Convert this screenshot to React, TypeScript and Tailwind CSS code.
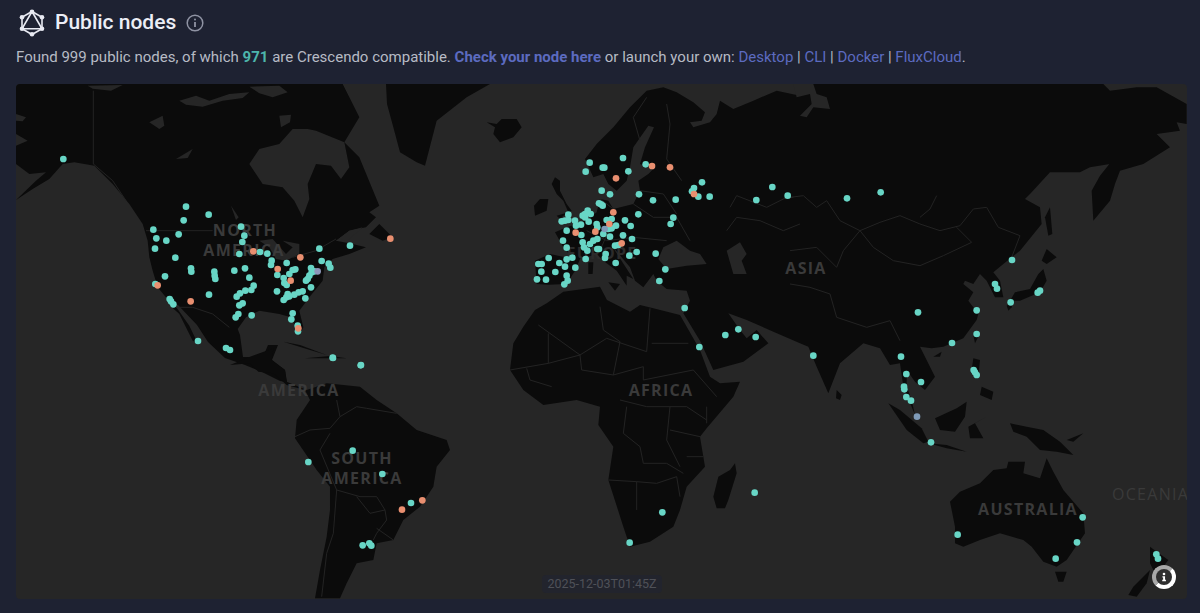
import React from 'react'

const LAND = '#0b0b0b'
const SEA = '#262626'
const LINE = '#232323'
const TEAL = '#68d6c6'
const ORANGE = '#e98f70'
const BLUE = '#7f9bb8'

// transforms: every shape below is written in the coords of a 3x crop of that area
const NA = 'translate(16 84) scale(0.33333)'
const EU = 'translate(400 84) scale(0.33333)'
const ASIA = 'translate(790 84) scale(0.33333)'
const SEAS = 'translate(800 320) scale(0.33333)'
const AF = 'translate(480 300) scale(0.33333)'
const SA = 'translate(230 340) scale(0.33333)'
const NZ = 'translate(1000 480) scale(0.33333)'

const naLand = [
  'M0,0 H980 L1000,40 L1030,100 L985,175 L1030,220 L1090,365 L1060,385 L1080,400 L1050,430 L1000,440 L960,470 L1000,478 L1050,490 L1000,510 L950,525 L925,550 L920,590 L880,640 L850,680 L862,730 L850,755 L825,700 L790,690 L730,680 L690,700 L665,735 L672,753 L681,819 L741,819 L756,783 L786,783 L768,828 L807,858 L813,894 L792,891 L738,864 L687,843 L627,822 L576,774 L543,723 L486,663 L462,655 L425,610 L410,560 L400,520 L395,470 L380,420 L340,360 L290,300 L235,245 L175,235 L140,240 L100,285 L50,315 L0,348 L60,290 L90,265 L40,270 L0,240 Z',
  'M470,672 L490,690 L530,770 L545,778 L520,725 L480,668 Z',
  'M1060,450 L1090,420 L1130,460 L1100,470 Z',
]
const naWater = [
  'M700,240 L730,195 L790,180 L830,135 L875,135 L900,140 L985,175 L1000,250 L975,285 L945,245 L900,240 L875,300 L880,345 L860,400 L835,350 L800,310 L740,300 Z',
  'M490,50 L540,35 L580,50 L640,30 L700,25 L680,42 L620,50 L560,68 L510,62 Z',
  'M700,8 L790,5 L815,25 L770,40 L730,28 Z',
  'M790,95 L825,92 L822,115 L795,130 Z',
  'M215,5 L320,3 L285,20 L230,14 Z',
  'M0,90 L30,100 L20,112 L0,110 Z',
  'M0,150 L35,170 L0,185 Z',
  'M730,470 L770,465 L810,510 L830,490 L800,470 L850,480 L850,510 L810,530 L780,525 L760,490 Z',
  'M400,115 L440,95 L445,125 L430,135 Z',
  'M480,225 L530,195 L515,222 Z',
  'M645,365 L668,400 L660,408 Z',
  'M960,470 L1000,440 L1040,430 L1000,465 Z',
]
const naLines = [
  'M390,440 L590,440',
  'M232,20 L232,240 L290,290 L330,350',
  'M480,670 L530,670 L590,690 L640,730',
  'M830,520 L900,500 L960,465',
]

// eurasia runs on from the europe crop, so x keeps growing past the crop's 1200
const eurasia =
  'M555,225 L590,180 L640,130 L690,70 L740,20 L790,10 L830,25 L880,55 L915,85 L905,110 L870,115 L880,130 L930,115 L950,90 L960,50 L1000,75 L1060,50 L1130,20 L1200,35 L1230,0 H2110 L2130,20 L2210,10 L2270,10 L2360,60 L2360,120 L2330,115 L2340,140 L2270,150 L2310,190 L2230,240 L2160,260 L2145,300 L2130,350 L2080,410 L2075,320 L2100,275 L2160,200 L2130,240 L2070,250 L2040,265 L1950,265 L1890,330 L1875,345 L1920,370 L1925,420 L1860,500 L1810,540 L1780,565 L1800,590 L1810,640 L1785,640 L1760,590 L1740,570 L1720,600 L1695,590 L1690,600 L1720,625 L1705,650 L1735,690 L1730,708 L1690,763 L1630,788 L1595,793 L1560,788 L1605,878 L1575,918 L1545,893 L1520,858 L1520,908 L1535,948 L1545,993 L1510,908 L1500,838 L1470,843 L1440,793 L1390,778 L1320,838 L1285,928 L1250,848 L1225,788 L1200,778 L1120,743 L1040,708 L985,688 L1020,738 L1040,763 L1070,738 L1105,778 L1030,833 L940,858 L900,770 L850,688 L870,650 L860,620 L800,615 L770,590 L760,570 L730,610 L705,590 L690,550 L640,490 L645,500 L700,585 L680,575 L680,605 L650,560 L610,530 L590,510 L560,520 L540,525 L525,560 L500,600 L445,602 L410,600 L405,530 L450,510 L520,525 L490,490 L465,445 L500,430 L530,420 L565,405 L590,385 L600,345 L625,350 L640,375 L700,360 L720,320 L715,290 L745,270 L760,255 L720,240 L735,190 L762,130 L745,125 L700,190 L690,250 L680,290 L650,320 L625,300 L610,270 L580,280 Z'

const euLand = [
  eurasia,
  'M-42,0 H270 L200,40 L110,110 L75,245 L50,235 L0,205 L-20,130 L-39,60 Z',
  'M260,115 L290,120 L305,105 L350,105 L365,130 L340,160 L300,175 L280,150 L285,130 Z',
  'M505,385 L490,350 L470,330 L455,300 L465,280 L480,290 L480,320 L500,360 L515,380 L490,395 L480,405 L470,395 Z',
  'M405,395 L402,365 L420,345 L445,345 L440,380 Z',
  'M625,595 L660,600 L645,620 Z',
  'M565,535 L580,535 L578,570 L565,570 Z',
]
const euWater = [
  'M790,490 L830,470 L870,500 L900,510 L920,540 L860,545 L800,555 L775,525 Z',
  'M980,500 L1020,475 L1040,510 L1025,530 L1040,570 L1000,570 Z',
]
const euLines = [
  'M700,360 L760,400 L830,400 L870,470',
  'M720,320 L790,330 L830,390',
  'M560,440 L620,470 L700,460 L800,470',
  'M990,370 L1010,335 L1100,370 L1160,340 L1180,340',
  'M980,440 L1010,400 L1080,410 L1150,440 L1200,420',
  'M600,345 L640,375 L630,430 L600,500',
  'M845,290 L800,225 L810,120 L800,60',
  'M720,170 L700,100 L740,40',
]

const asiaLand = [
  'M760,555 L770,590 L750,625 L690,650 L660,650 L675,625 L720,615 L745,570 Z',
  'M770,495 L800,520 L770,540 L755,530 Z',
  'M650,665 L670,650 L665,670 L655,680 Z',
  'M780,370 L787,450 L775,455 L765,400 Z',
]
const asiaWater = ['M10,0 L70,0 L80,30 L110,40 L120,75 L70,70 L50,100 L30,95 L65,60 L60,30 L20,40 Z']
const asiaLines = [
  'M0,340 L40,335 L80,370 L110,350 L150,410 L210,440 L270,415 L330,395 L390,420 L450,440 L510,425 L550,375 L590,370 L625,430 L690,455 L665,520',
  'M210,440 L250,490 L310,530 L390,545 L460,515 L545,475 L500,430',
  'M0,600 L60,610 L120,630 L140,700 L230,730 L300,710 L330,770',
  'M210,440 L160,500 L140,550 L80,490 L0,500',
  'M440,335 L420,375 L390,400',
]

const seasLand = [
  'M520,45 L540,40 L525,70 Z',
  'M400,110 L425,95 L420,110 Z',
  'M520,115 L540,120 L535,170 L515,150 Z',
  'M545,200 L580,215 L575,240 L540,225 Z',
  'M110,210 L125,225 L120,240 L108,235 Z',
  'M405,295 L470,265 L500,245 L495,290 L465,335 L420,330 Z',
  'M265,250 L300,270 L365,325 L385,365 L370,370 L320,330 Z',
  'M385,370 L440,375 L500,395 L440,385 Z',
  'M505,320 L560,290 L525,310 L550,355 L510,355 Z',
  'M630,310 L680,320 L730,330 L780,365 L820,405 L770,395 L720,390 L680,350 L640,335 Z',
  'M800,360 L850,340 L820,365 Z',
  'M450,545 L480,515 L540,490 L580,450 L620,445 L625,425 L675,425 L670,460 L720,475 L740,415 L760,455 L790,510 L850,580 L855,640 L800,720 L770,740 L730,725 L695,680 L670,660 L600,640 L540,660 L490,680 L465,670 L465,620 Z',
  'M765,755 L800,755 L790,785 L775,785 Z',
]

const afLand = [
  'M165,30 L200,10 L250,-25 L360,-40 L381,0 L450,35 L480,15 L520,25 L600,45 L660,150 L690,230 L720,250 L780,245 L760,290 L680,385 L660,410 L675,500 L620,560 L600,630 L580,680 L510,725 L450,740 L430,680 L385,540 L400,440 L355,375 L360,320 L290,300 L190,315 L130,270 L90,210 L100,130 L130,80 Z',
  'M765,490 L770,520 L745,600 L735,625 L710,625 L700,590 L715,530 L750,510 Z',
]
const afLines = [
  'M175,75 L300,165 L380,115 L500,155 L510,25',
  'M515,130 H625',
  'M205,100 L205,190 L300,165 L305,210 L400,225 L420,125',
  'M90,210 L205,190',
  'M140,205 L150,240 L215,260',
  'M420,300 L500,320 L570,320 L620,320 L680,360',
  'M400,225 L490,200 L490,240 L640,210',
  'M360,20 L370,90 L420,125',
  'M440,320 L430,400 L480,440 L490,490 L560,490 L610,520',
  'M385,540 L470,545 L470,630',
  'M470,545 L530,550 L590,530 L600,590',
  'M570,320 L560,420 L600,500',
  'M660,410 L570,390',
  'M680,320 L680,370',
  'M620,470 L670,470',
  'M640,210 L710,290',
]

const saLand = [
  'M0,0 L0,75 L60,50 L130,25 L125,60 L165,90 L170,125 L230,150 L290,130 L390,140 L440,180 L500,220 L560,270 L650,300 L660,330 L620,380 L610,440 L570,500 L520,540 L490,600 L440,610 L430,660 L380,670 L350,730 L330,775 L255,775 L270,690 L290,590 L300,510 L300,440 L260,390 L195,295 L200,240 L240,180 L225,150 L170,135 L130,100 L85,95 L60,70 L0,75 Z',
  'M160,5 L210,15 L290,45 L240,30 Z',
  'M225,55 L350,55 L300,48 Z',
]
const saLines = [
  'M330,230 L380,200 L410,205 L500,220',
  'M195,290 L240,270 L300,265 L330,230 L320,180',
  'M270,330 L300,280',
  'M270,330 L320,450 L310,580 L290,640 L275,770',
  'M320,450 L390,470 L440,470 L465,510 L470,540 L440,580 L430,600',
  'M380,470 L420,520 L465,510',
  'M440,565 L490,600',
]

const nzLand = [
  'M450,200 L470,215 L505,240 L490,260 L470,290 L450,250 Z',
  'M450,270 L440,310 L410,350 L385,345 L400,320 Z',
]

const labels = [
  { text: 'NORTH', x: 245, y: 236 },
  { text: 'AMERICA', x: 244, y: 256 },
  { text: 'AMERICA', x: 299, y: 396 },
  { text: 'SOUTH', x: 362, y: 464 },
  { text: 'AMERICA', x: 362, y: 484 },
  { text: 'AFRICA', x: 661, y: 396 },
  { text: 'ASIA', x: 806, y: 274 },
  { text: 'AUSTRALIA', x: 1028, y: 515 },
]

type Pt = [number, number]

const groups: { transform: string; fill: string; pts: Pt[] }[] = [
  {
    transform: NA,
    fill: TEAL,
    pts: [
      [142, 225], [510, 368], [578, 392], [503, 409], [412, 437], [421, 463], [451, 470], [488, 451], [417, 494], [478, 521],
      [675, 428], [685, 455], [679, 474], [670, 510], [732, 504], [754, 509], [767, 530], [765, 543], [812, 537], [910, 494],
      [1002, 485], [917, 531], [938, 539], [943, 551], [525, 553], [526, 563], [595, 563], [596, 575], [598, 585], [655, 560],
      [687, 553], [700, 581], [713, 605], [706, 618], [688, 620], [672, 628], [662, 638], [447, 577], [418, 600], [461, 645],
      [465, 652], [472, 661], [579, 632], [680, 658], [670, 664], [667, 690], [659, 700], [707, 694], [783, 622], [784, 573],
      [803, 582], [805, 597], [812, 603], [820, 570], [830, 558], [838, 556], [875, 585], [880, 575], [887, 565], [895, 562],
      [885, 552], [885, 610], [870, 590], [860, 622], [848, 625], [835, 632], [820, 637], [815, 630], [803, 648], [811, 640],
      [868, 643], [830, 688], [826, 706], [845, 725], [846, 742], [546, 771], [630, 792], [642, 798], [951, 822], [1035, 843],
    ],
  },
  { transform: NA, fill: ORANGE, pts: [[712, 502], [853, 520], [785, 555], [824, 590], [425, 604], [524, 652], [1123, 464], [847, 733]] },
  { transform: NA, fill: '#8c95b8', pts: [[905, 562]] },
  {
    transform: EU,
    fill: TEAL,
    pts: [
      [569, 236], [557, 263], [608, 251], [613, 251], [669, 222], [685, 262], [737, 241], [605, 320], [630, 331], [597, 358],
      [603, 361], [608, 365], [717, 331], [759, 349], [827, 347], [906, 295], [882, 312], [876, 322], [895, 338], [929, 338],
      [1117, 309], [1069, 348], [1163, 335], [715, 391], [675, 409], [692, 426], [820, 401], [812, 420], [505, 392], [485, 412],
      [495, 410], [505, 408], [525, 410], [500, 440], [528, 425], [543, 422], [548, 395], [555, 390], [563, 380], [572, 390],
      [555, 400], [566, 413], [590, 420], [592, 430], [620, 408], [635, 405], [648, 425], [625, 435], [635, 433], [544, 453],
      [489, 470], [500, 491], [548, 475], [552, 490], [562, 500], [570, 480], [580, 470], [592, 465], [610, 450], [630, 458],
      [669, 454], [696, 465], [645, 485], [655, 483], [592, 495], [597, 495], [617, 510], [615, 522], [557, 525], [500, 526],
      [517, 521], [446, 522], [415, 540], [425, 540], [478, 537], [495, 548], [526, 551], [424, 563], [466, 564], [500, 575],
      [411, 586], [438, 587], [503, 590], [493, 601], [647, 537], [688, 515], [710, 504], [767, 509], [796, 556], [778, 591],
    ],
  },
  { transform: EU, fill: ORANGE, pts: [[756, 246], [810, 250], [648, 283], [640, 385], [527, 446], [586, 443], [628, 420], [665, 478], [882, 330]] },
  { transform: EU, fill: BLUE, pts: [[614, 435]] },
  { transform: AF, fill: TEAL, pts: [[614, 24], [658, 141], [736, 105], [775, 88], [827, 111], [1000, 167], [824, 578], [547, 637], [449, 728]] },
  { transform: ASIA, fill: TEAL, pts: [[171, 343], [272, 325], [384, 685], [560, 679], [666, 528], [615, 600], [621, 614], [662, 655], [743, 626], [750, 620], [560, 750], [486, 777]] },
  {
    transform: SEAS,
    fill: TEAL,
    pts: [
      [303, 110], [319, 162], [363, 186], [312, 200], [313, 208], [319, 231], [333, 242], [393, 367], [521, 150], [525, 157],
      [530, 165], [767, 716], [831, 667], [848, 592], [473, 644], [1069, 703], [1074, 716],
    ],
  },
  { transform: SEAS, fill: BLUE, pts: [[351, 290]] },
  { transform: SA, fill: TEAL, pts: [[308, 53], [392, 76], [368, 332], [235, 366], [457, 402], [543, 489], [398, 616], [418, 610], [424, 617]] },
  { transform: SA, fill: ORANGE, pts: [[516, 509], [577, 481]] },
]

function Shapes({ transform, land = [], water = [], lines = [] }: { transform: string; land?: string[]; water?: string[]; lines?: string[] }) {
  return (
    <g transform={transform}>
      {land.map((d, i) => <path key={i} d={d} fill={LAND} />)}
      {water.map((d, i) => <path key={i} d={d} fill={SEA} />)}
      {lines.map((d, i) => <path key={i} d={d} fill="none" stroke={LINE} strokeWidth={3} />)}
    </g>
  )
}

function WorldMap() {
  return (
    <svg viewBox="16 84 1171 515" className="block w-full h-full">
      <Shapes transform={NA} land={naLand} water={naWater} lines={naLines} />
      <Shapes transform={EU} land={euLand} water={euWater} lines={euLines} />
      <Shapes transform={AF} land={afLand} lines={afLines} />
      <Shapes transform={SA} land={saLand} lines={saLines} />
      <Shapes transform={ASIA} land={asiaLand} water={asiaWater} lines={asiaLines} />
      <Shapes transform={SEAS} land={seasLand} />
      <Shapes transform={NZ} land={nzLand} />
      {labels.map((l, i) => (
        <text key={i} x={l.x} y={l.y} textAnchor="middle" fill="#3a3a3a" className="font-['Open_Sans'] font-bold text-[16px] tracking-[1.3px]">
          {l.text}
        </text>
      ))}
      <text x={602} y={259} textAnchor="middle" fill="#2c2c2c" className="font-['Open_Sans'] font-bold text-[16px] tracking-[1.3px]">EUROPE</text>
      <text x={1112} y={500} fill="#3a3a3a" className="font-['Open_Sans'] text-[16px] tracking-[1.3px]">OCEANIA</text>
      {groups.map((g, i) => (
        <g key={i} transform={g.transform} fill={g.fill}>
          {g.pts.map(([x, y], j) => <circle key={j} cx={x} cy={y} r={10} />)}
        </g>
      ))}
    </svg>
  )
}

function GraphLogo() {
  return (
    <svg viewBox="0 0 26 28" className="w-[26px] h-[28px]" fill="none" stroke="#e8eaf2" strokeWidth="1.6">
      <path d="M13 2.5 L23 8.2 V19.8 L13 25.5 L3 19.8 V8.2 Z" />
      <path d="M13 2.5 L23 19.8 H3 Z" />
      <g fill="#e8eaf2" stroke="none">
        <circle cx="13" cy="2.8" r="2.3" />
        <circle cx="23" cy="8.2" r="2.3" />
        <circle cx="23" cy="19.8" r="2.3" />
        <circle cx="13" cy="25.2" r="2.3" />
        <circle cx="3" cy="19.8" r="2.3" />
        <circle cx="3" cy="8.2" r="2.3" />
      </g>
    </svg>
  )
}

const App = () => {
  return (
    <div className="h-[613px] bg-[#1e2232] pl-4 pr-[13px] pt-[9px] font-['Roboto',sans-serif] overflow-hidden">
      <div className="flex items-center h-[28px]">
        <div className="ml-[3px]"><GraphLogo /></div>
        <h1 className="ml-[10px] text-[21px] font-medium text-[#eceef6]">Public nodes</h1>
        <svg viewBox="0 0 18 18" className="ml-[10px] w-[18px] h-[18px]" fill="none" stroke="#8f93a3" strokeWidth="1.5">
          <circle cx="9" cy="9" r="7.8" />
          <path d="M9 8 V13" strokeWidth="1.8" />
          <circle cx="9" cy="5.4" r="1" fill="#8f93a3" stroke="none" />
        </svg>
      </div>
      <p className="mt-[9px] text-[15px] leading-[22px] text-[#b7bbc5]">
        Found 999 public nodes, of which <span className="font-bold text-[#4db6ac]">971</span> are Crescendo compatible.{' '}
        <a className="font-bold text-[#5c6bc0]">Check your node here</a> or launch your own:{' '}
        <a className="text-[#5c6bc0]">Desktop</a> | <a className="text-[#5c6bc0]">CLI</a> | <a className="text-[#5c6bc0]">Docker</a> | <a className="text-[#5c6bc0]">FluxCloud</a>.
      </p>
      <div className="relative mt-[16px] h-[515px] rounded-sm overflow-hidden bg-[#262626]">
        <WorldMap />
        <div className="absolute bottom-[6px] left-[526px] h-[18px] w-[120px] flex items-center justify-center rounded-sm bg-[#22242d] text-[12.5px] text-[#4f5158]">
          2025-12-03T01:45Z
        </div>
        <div className="absolute left-[1136px] top-[481px] w-[24px] h-[24px] rounded-full border-4 border-l-[#a8a8a8] border-t-[#a8a8a8] border-r-white border-b-white bg-[#2e2e2e] flex items-center justify-center">
          <svg viewBox="0 0 16 16" className="w-[14px] h-[14px] shrink-0">
            <circle cx="8" cy="4.6" r="1.5" fill="#fff" />
            <path d="M6.2 7 H9.2 V11 H10.2 V12.8 H6 V11 H7 V8.6 H6.2 Z" fill="#fff" />
          </svg>
        </div>
      </div>
    </div>
  )
}

export default App
